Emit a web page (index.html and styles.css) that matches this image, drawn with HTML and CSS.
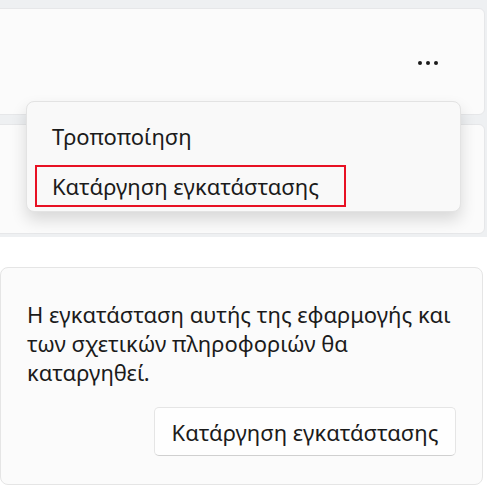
FILE: index.html
```html
<!DOCTYPE html>
<html lang="el">
<head>
  <meta charset="UTF-8" />
  <meta name="viewport" content="width=device-width, initial-scale=1.0"/>
  <title>Εφαρμογές</title>
  <link rel="stylesheet" href="styles.css">
</head>
<body>

  <div class="top-shot">
    <div class="app-card">
      <button class="more-button" aria-label="Περισσότερες επιλογές">
        <span class="dot"></span><span class="dot"></span><span class="dot"></span>
      </button>
    </div>
    <div class="app-card"></div>

    <div class="flyout">
      <div class="flyout-item">Τροποποίηση</div>
      <div class="flyout-item highlighted">Κατάργηση εγκατάστασης</div>
    </div>
  </div>

  <div class="bottom-shot">
    <div class="confirm-card">
      <p>Η εγκατάσταση αυτής της εφαρμογής και των σχετικών πληροφοριών θα καταργηθεί.</p>
      <div class="confirm-actions">
        <button class="confirm-button">Κατάργηση εγκατάστασης</button>
      </div>
    </div>
  </div>

</body>
</html>
```

FILE: styles.css
```css
* { margin: 0; padding: 0; box-sizing: border-box; }

body {
  font-family: 'Noto Sans', 'Open Sans', sans-serif;
  background-color: #fff;
  color: #1b1b1b;
  width: 487px;
  overflow: hidden;
}

/* top screenshot: app list with the ... menu open */
.top-shot {
  position: relative;
  height: 237px;
  padding-top: 8px;
  background-color: #eef0f2;
}

.app-card {
  display: flex;
  align-items: center;
  justify-content: flex-end;
  width: 495px;
  height: 107px;
  margin-left: -10px;
  padding-right: 46px;
  background-color: #fbfbfb;
  border: 1px solid #e6e7e9;
  border-radius: 6px;
}

.app-card + .app-card {
  margin-top: 9px;
  height: 110px;
}

.more-button {
  display: flex;
  gap: 4px;
  margin-top: 2px;
  background: none;
  border: none;
}

.dot {
  width: 4px;
  height: 4px;
  border-radius: 50%;
  background-color: #1b1b1b;
}

.flyout {
  position: absolute;
  top: 101px;
  left: 26px;
  width: 435px;
  height: 111px;
  padding: 11px 8px 0 8px;
  background-color: #f9f9f9;
  border: 1px solid #e3e3e3;
  border-radius: 8px;
  box-shadow: 0 8px 16px rgba(0, 0, 0, 0.14);
}

.flyout-item {
  height: 42px;
  padding-left: 15px;
  font-size: 22px;
  line-height: 42px;
  border: 2px solid transparent;
}

.flyout-item + .flyout-item {
  margin-top: 10px;
}

.flyout-item.highlighted {
  width: 311px;
  border-color: #e81123;
  line-height: 38px;
}

/* bottom screenshot: confirmation flyout */
.bottom-shot {
  padding-top: 30px;
  padding-right: 4px;
}

.confirm-card {
  height: 218px;
  padding: 32px 26px 0 26px;
  background-color: #fbfbfb;
  border: 1px solid #e5e5e5;
  border-radius: 8px;
}

.confirm-card p {
  font-size: 22px;
  line-height: 29px;
}

.confirm-actions {
  display: flex;
  justify-content: flex-end;
  margin-top: 20px;
}

.confirm-button {
  width: 302px;
  height: 49px;
  font-family: 'Noto Sans', 'Open Sans', sans-serif;
  font-size: 22px;
  color: #1b1b1b;
  background-color: #fefefe;
  border: 1px solid #e5e5e5;
  border-bottom-color: #d0d0d0;
  border-radius: 5px;
}
```
